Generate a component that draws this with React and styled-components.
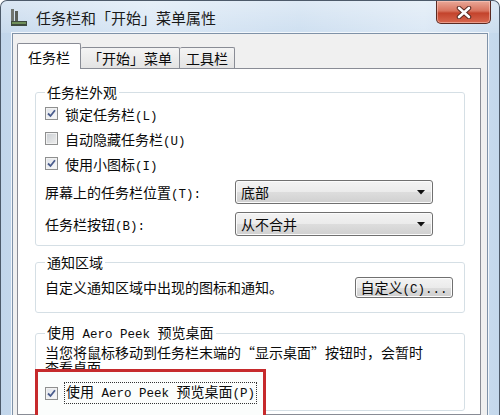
import styled, { createGlobalStyle } from "styled-components";

const GlobalStyle = createGlobalStyle`
  html, body {
    margin: 0;
    padding: 0;
    background: #fff;
  }
`;

const Window = styled.div`
  width: 500px;
  height: 415px;
  box-sizing: border-box;
  border: 1px solid #4d5a6a;
  border-bottom: none;
  border-radius: 7px 7px 0 0;
  background: linear-gradient(90deg, #c2d6eb 0%, #d6e5f4 30%, #c9dcef 60%, #d8e6f4 85%, #c4d8ec 100%);
  display: flex;
  flex-direction: column;
  overflow: hidden;
  font-family: "Noto Sans CJK SC", sans-serif;
  font-size: 14px;
  color: #0a0a0a;
`;

const TitleBar = styled.div`
  height: 32px;
  flex: none;
  display: flex;
  align-items: center;
  padding-left: 8px;
  background: linear-gradient(180deg, rgba(255,255,255,0.4), rgba(255,255,255,0.1));
`;

const TitleText = styled.span`
  font-size: 15px;
  color: #1a1a1a;
  margin-left: 7px;
`;

const CloseButton = styled.div`
  margin-left: auto;
  margin-right: 8px;
  align-self: flex-start;
  width: 55px;
  height: 23px;
  box-sizing: border-box;
  border: 1px solid #5a2a22;
  border-top: none;
  border-radius: 0 0 5px 5px;
  background: linear-gradient(180deg, #e9a898 0%, #d8735e 45%, #c3432c 55%, #d8684f 100%);
  box-shadow: inset 0 0 0 1px rgba(255,210,200,0.5);
  display: flex;
  align-items: center;
  justify-content: center;
`;

const Client = styled.div`
  flex: 1;
  margin: 0 11px;
  background: #f0f0f0;
  border: 1px solid #7f92a8;
  border-bottom: none;
  box-shadow: 0 0 0 1px #f2f7fc;
  padding: 9px 6px 0 4px;
  display: flex;
  flex-direction: column;
`;

const TabRow = styled.div`
  display: flex;
  align-items: flex-end;
  height: 26px;
  margin-bottom: -1px;
  position: relative;
  z-index: 1;
`;

const Tab = styled.div`
  box-sizing: border-box;
  height: ${p => (p.$active ? 26 : 21)}px;
  margin-bottom: ${p => (p.$active ? 0 : 1)}px;
  padding: 0 ${p => p.$pad}px;
  border: 1px solid #898c95;
  border-bottom: none;
  border-left: ${p => (p.$active || p.$first ? "1px solid #898c95" : "none")};
  border-radius: 2px 2px 0 0;
  background: ${p => (p.$active ? "#fff" : "linear-gradient(180deg, #f4f4f4 0%, #ececec 50%, #e3e3e3 100%)")};
  display: flex;
  align-items: center;
  white-space: nowrap;
`;

const Panel = styled.div`
  flex: 1;
  background: #fff;
  border: 1px solid #898c95;
  padding: 14px 15px 0 17px;
`;

const Group = styled.fieldset`
  margin: ${p => p.$mt || 0}px 0 0;
  padding: 0 9px ${p => p.$pb || 0}px;
  border: 1px solid #d5dfe5;
  border-radius: 3px;
  min-width: 0;
`;

const Legend = styled.legend`
  padding: 0 2px;
  line-height: 18px;
`;

// latin runs are narrower, like the half-width glyphs of the system font
const Lat = styled.span`
  font-family: "Liberation Mono", monospace;
  font-size: 12.5px;
`;

const Quote = styled.span`
  display: inline-block;
  width: 14px;
  text-align: ${p => (p.$open ? "right" : "left")};
`;

const CheckRow = styled.label`
  display: flex;
  align-items: center;
  gap: 7px;
  height: ${p => p.$h || 25}px;
  white-space: nowrap;
`;

const Box = styled.span`
  width: 13px;
  height: 13px;
  box-sizing: border-box;
  flex: none;
  border: 1px solid #8e8f8f;
  background: ${p => (p.$checked
    ? "linear-gradient(135deg, #dfe2e8 0%, #fafafa 100%)"
    : "linear-gradient(135deg, #c9cdd2 0%, #eeeeee 100%)")};
  box-shadow: inset 0 0 0 1px #f2f2f2;
  display: flex;
  align-items: center;
  justify-content: center;
`;

const FieldRow = styled.div`
  display: grid;
  grid-template-columns: 190px 198px;
  align-items: center;
  height: 32px;
  white-space: nowrap;
`;

const Combo = styled.div`
  height: 24px;
  box-sizing: border-box;
  border: 1px solid #707070;
  border-radius: 3px;
  background: linear-gradient(180deg, #f3f3f3 0%, #ebebeb 50%, #dddddd 51%, #d0d0d0 100%);
  box-shadow: inset 0 0 0 1px #fbfbfb;
  padding: 0 7px 0 5px;
  display: flex;
  align-items: center;
  justify-content: space-between;
`;

const ButtonRow = styled.div`
  display: flex;
  align-items: center;
  justify-content: space-between;
  height: 24px;
  margin-top: 4px;
  padding-right: 2px;
  white-space: nowrap;
`;

const PushButton = styled.div`
  width: 98px;
  height: 21px;
  box-sizing: border-box;
  border: 1px solid #707070;
  border-radius: 3px;
  background: linear-gradient(180deg, #f3f3f3 0%, #ebebeb 50%, #dddddd 51%, #cfcfcf 100%);
  box-shadow: inset 0 0 0 1px #fcfcfc;
  display: flex;
  align-items: center;
  justify-content: center;
  white-space: nowrap;
`;

const Note = styled.p`
  margin: 1px 0 0;
  line-height: 15px;
  white-space: nowrap;
`;

const Highlight = styled.div`
  position: relative;
  z-index: 1;
  width: 231px;
  height: 53px;
  box-sizing: border-box;
  margin: -6px 0 -12px -10px;
  padding: 11px 0 0 7px;
  border: 3px solid #c62a2c;
  background: #fbfdfc;
`;

const Focus = styled.span`
  outline: 1px dotted #333;
  padding: 0 1px;
  line-height: 17px;
`;

const Check = ({ checked }) => (
  <Box $checked={checked}>
    {checked && (
      <svg width="9" height="9" viewBox="0 0 9 9">
        <path d="M1 4.5 L3.5 7 L8 1.2" fill="none" stroke="#4a5c8c" strokeWidth="1.8" />
      </svg>
    )}
  </Box>
);

const Arrow = () => (
  <svg width="8" height="5" viewBox="0 0 8 5">
    <path d="M0 0 H8 L4 4.5 Z" fill="#111" />
  </svg>
);

const TaskbarIcon = () => (
  <svg width="20" height="20" viewBox="0 0 20 20">
    <rect x="2" y="2" width="3" height="14" fill="#707570" />
    <rect x="6" y="4" width="3" height="12" fill="#5a5f5a" />
    <rect x="2" y="14" width="16" height="5" fill="#3e4a3e" />
    <rect x="3" y="15" width="14" height="2" fill="#6f8f5a" />
  </svg>
);

const CloseGlyph = () => (
  <svg width="16" height="13" viewBox="0 0 16 13">
    <path d="M3 2 L13 11 M13 2 L3 11" stroke="#5a2a22" strokeWidth="4.5" strokeLinecap="round" />
    <path d="M3 2 L13 11 M13 2 L3 11" stroke="#fff" strokeWidth="2.6" strokeLinecap="round" />
  </svg>
);

export default function App() {
  return (
    <>
      <GlobalStyle />
      <Window>
        <TitleBar>
          <TaskbarIcon />
          <TitleText>任务栏和「开始」菜单属性</TitleText>
          <CloseButton>
            <CloseGlyph />
          </CloseButton>
        </TitleBar>
        <Client>
          <TabRow>
            <Tab $active $pad={10}>任务栏</Tab>
            <Tab $pad={7}>「开始」菜单</Tab>
            <Tab $pad={6}>工具栏</Tab>
          </TabRow>
          <Panel>
            <Group $pb={5}>
              <Legend>任务栏外观</Legend>
              <CheckRow><Check checked /><span>锁定任务栏<Lat>(L)</Lat></span></CheckRow>
              <CheckRow><Check /><span>自动隐藏任务栏<Lat>(U)</Lat></span></CheckRow>
              <CheckRow><Check checked /><span>使用小图标<Lat>(I)</Lat></span></CheckRow>
              <FieldRow>
                <span>屏幕上的任务栏位置<Lat>(T):</Lat></span>
                <Combo>底部<Arrow /></Combo>
              </FieldRow>
              <FieldRow>
                <span>任务栏按钮<Lat>(B):</Lat></span>
                <Combo>从不合并<Arrow /></Combo>
              </FieldRow>
            </Group>
            <Group $mt={7} $pb={13}>
              <Legend>通知区域</Legend>
              <ButtonRow>
                <span>自定义通知区域中出现的图标和通知。</span>
                <PushButton><span>自定义<Lat>(C)...</Lat></span></PushButton>
              </ButtonRow>
            </Group>
            <Group $mt={10}>
              <Legend>使用<Lat> Aero Peek </Lat>预览桌面</Legend>
              <Note>
                当您将鼠标移动到任务栏末端的<Quote $open>“</Quote>显示桌面<Quote>”</Quote>按钮时，会暂时
                <br />
                查看桌面。
              </Note>
              <Highlight>
                <CheckRow $h={20}>
                  <Check checked />
                  <Focus>使用<Lat> Aero Peek </Lat>预览桌面<Lat>(P)</Lat></Focus>
                </CheckRow>
              </Highlight>
            </Group>
          </Panel>
        </Client>
      </Window>
    </>
  );
}
